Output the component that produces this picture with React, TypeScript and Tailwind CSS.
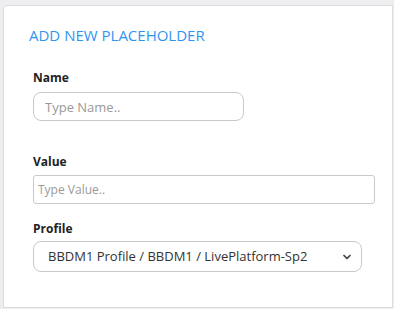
import { ChevronDown } from 'lucide-react';

export default function App() {
  return (
    <div className="w-[394px] h-[309px] bg-[#eeeef1] pt-[5px] pl-[3px] overflow-hidden" style={{ fontFamily: '"Open Sans", "Noto Sans", sans-serif' }}>
      <div className="w-[390px] h-[303px] bg-white border border-[#dcdce0] rounded-tl-[4px]">
        {/* Header */}
        <h2 className="pl-[25px] pt-[20px] text-[15px] leading-[18px] text-[#2f96f0]">
          ADD NEW PLACEHOLDER
        </h2>

        <div className="pl-[29px] pt-[26px]">
          {/* Name */}
          <label className="block text-[12px] leading-[16px] font-bold text-[#222]">Name</label>
          <input
            placeholder="Type Name.."
            className="mt-[6px] w-[211px] h-[29px] rounded-[8px] border border-[#c9c9c9] px-[11px] text-[13px] placeholder:text-[#9a9a9a] outline-none"
          />

          {/* Value */}
          <label className="block mt-[33px] text-[12px] leading-[16px] font-bold text-[#222]">Value</label>
          <input
            placeholder="Type Value.."
            className="mt-[5px] w-[342px] h-[29px] rounded-[3px] border border-[#c9c9c9] px-[4px] text-[12px] placeholder:text-[#9a9a9a] outline-none"
          />

          {/* Profile */}
          <label className="block mt-[17px] text-[12px] leading-[16px] font-bold text-[#222]">Profile</label>
          <div className="mt-[4px] w-[329px] h-[31px] rounded-[8px] border border-[#c9c9c9] flex items-center justify-between pl-[14px] pr-[8px]">
            <span className="text-[13px] text-[#333]">BBDM1 Profile / BBDM1 / LivePlatform-Sp2</span>
            <ChevronDown size={12} strokeWidth={3.5} className="text-[#444]" />
          </div>
        </div>
      </div>
    </div>
  );
}
